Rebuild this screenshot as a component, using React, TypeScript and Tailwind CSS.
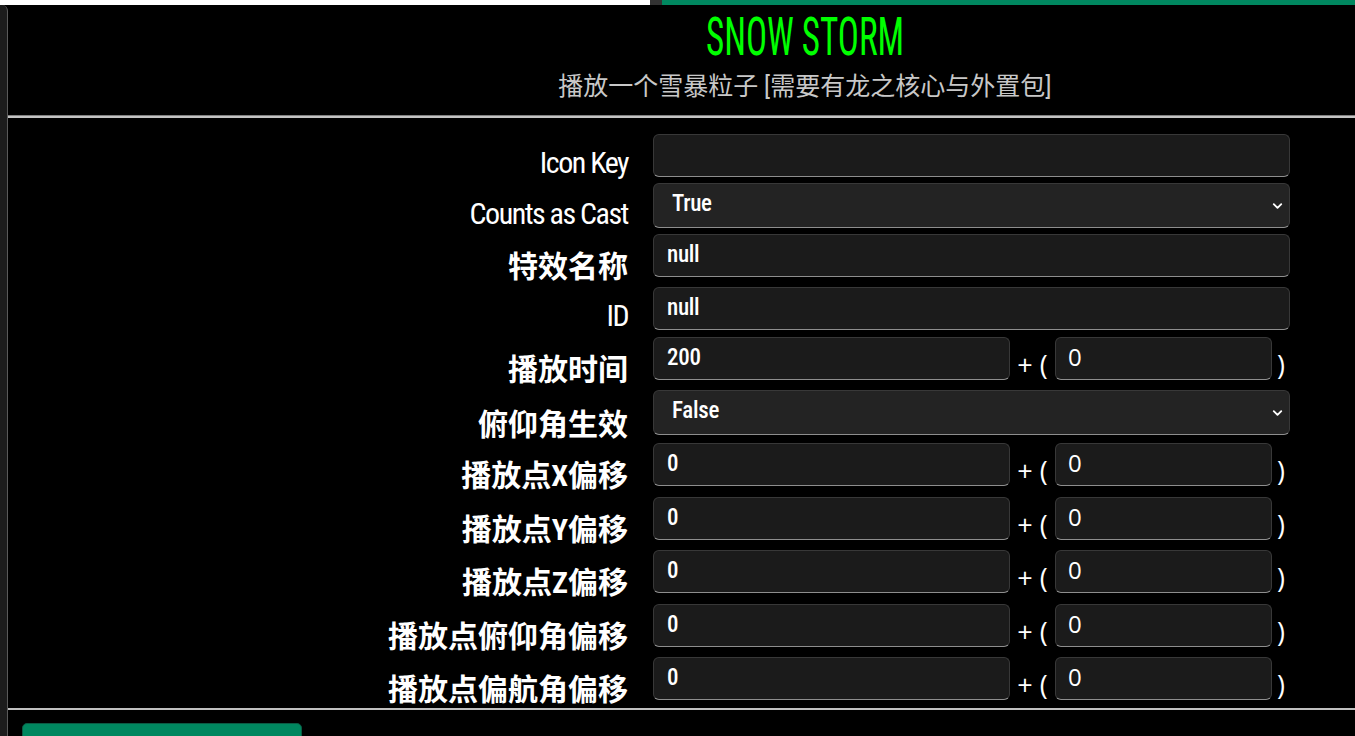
import { ChevronDown } from "lucide-react";

type Row = {
  label: string;
  cn: boolean;
  kind: "input" | "select" | "range";
  value: string;
  extra?: string;
  gap: string;
};

const ROWS: Row[] = [
  { label: "Icon Key", cn: false, kind: "input", value: "", gap: "mt-[16px]" },
  { label: "Counts as Cast", cn: false, kind: "select", value: "True", gap: "mt-[6px]" },
  { label: "特效名称", cn: true, kind: "input", value: "null", gap: "mt-[6px]" },
  { label: "ID", cn: false, kind: "input", value: "null", gap: "mt-[10px]" },
  { label: "播放时间", cn: true, kind: "range", value: "200", extra: "0", gap: "mt-[7px]" },
  { label: "俯仰角生效", cn: true, kind: "select", value: "False", gap: "mt-[10px]" },
  { label: "播放点X偏移", cn: true, kind: "range", value: "0", extra: "0", gap: "mt-[8px]" },
  { label: "播放点Y偏移", cn: true, kind: "range", value: "0", extra: "0", gap: "mt-[11px]" },
  { label: "播放点Z偏移", cn: true, kind: "range", value: "0", extra: "0", gap: "mt-[10px]" },
  { label: "播放点俯仰角偏移", cn: true, kind: "range", value: "0", extra: "0", gap: "mt-[11px]" },
  { label: "播放点偏航角偏移", cn: true, kind: "range", value: "0", extra: "0", gap: "mt-[10px]" },
];

const inputCls =
  "h-[43px] rounded-[6px] border border-[#383838] border-b-[#8e8e8e] bg-[#1b1b1b] pl-[13px] pb-[3px] text-[23px] font-medium tracking-[-0.3px] text-white outline-none [font-family:'Roboto_Condensed','Noto_Sans_CJK_SC',sans-serif]";

function Field({ row }: { row: Row }) {
  if (row.kind === "select") {
    return (
      <div className="relative w-[637px]">
        <select
          defaultValue={row.value}
          className="h-[45px] w-full appearance-none rounded-[6px] border border-[#383838] border-b-[#8e8e8e] bg-[#232323] pl-[18px] pb-[3px] text-[23px] font-medium tracking-[-0.3px] text-white outline-none [font-family:'Roboto_Condensed',sans-serif]"
        >
          <option>True</option>
          <option>False</option>
        </select>
        <ChevronDown
          className="pointer-events-none absolute right-[5px] top-1/2 -translate-y-1/2 text-white"
          size={15}
          strokeWidth={3}
        />
      </div>
    );
  }
  if (row.kind === "range") {
    return (
      <div className="flex w-[637px] items-end">
        <input readOnly value={row.value} className={`${inputCls} w-[357px]`} />
        <span className="mb-[2px] w-[45px] text-center text-[27px] leading-[27px] text-white [font-family:'Open_Sans',sans-serif]">
          + (
        </span>
        <input
          readOnly
          value={row.extra}
          className="h-[43px] w-[217px] rounded-[6px] border border-[#383838] border-b-[#8e8e8e] bg-[#1b1b1b] pl-[12px] pb-[5px] text-[24px] text-white outline-none [font-family:'Open_Sans',sans-serif]"
        />
        <span className="mb-[2px] w-[18px] text-center text-[27px] leading-[27px] text-white [font-family:'Open_Sans',sans-serif]">
          )
        </span>
      </div>
    );
  }
  return <input readOnly value={row.value} className={`${inputCls} w-[637px]`} />;
}

export default function App() {
  return (
    <div className="flex h-[736px] flex-col overflow-hidden bg-black">
      <div className="flex h-[5px] shrink-0">
        <div className="w-[650px] bg-white" />
        <div className="w-[12px] bg-[#333333]" />
        <div className="flex-1 bg-[#00875f]" />
      </div>

      <div className="flex flex-1">
        <div className="mb-[3px] w-[8px] shrink-0 rounded-r-[6px] border-r border-[#5a5a5a] bg-[#1c1c1c]" />

        <main className="flex-1">
          <div className="pl-[247px] pt-[5px] text-center">
            <div className="scale-x-[0.65] text-[54px] leading-[54px] text-[#00ff00] [font-family:'Roboto_Condensed',sans-serif]">
              SNOW STORM
            </div>
            <p className="mt-[10px] text-[25px] leading-[25px] text-[#c8c8c8] [font-family:'Roboto_Condensed','Noto_Sans_CJK_SC',sans-serif]">
              播放一个雪暴粒子 [需要有龙之核心与外置包]
            </p>
          </div>

          <div className="mt-[16px] h-[3px] border-t border-[#808080] bg-[#c4c4c4]" />

          <div className="flex flex-col">
            {ROWS.map((row) => (
              <div key={row.label} className={`flex items-end ${row.gap}`}>
                <div
                  className={`w-[620px] shrink-0 text-right text-[30px] leading-[30px] text-white [font-family:'Roboto_Condensed','Noto_Sans_CJK_SC',sans-serif] ${
                    row.cn ? "-mb-[5px] font-bold" : "-mb-[1px] font-normal tracking-[-1.5px]"
                  }`}
                >
                  {row.label}
                </div>
                <div className="ml-[25px]">
                  <Field row={row} />
                </div>
              </div>
            ))}
          </div>

          <div className="mt-[8px] h-[2px] bg-[#c0c0c0]" />

          <button className="ml-[14px] mt-[13px] h-[40px] w-[280px] rounded-[5px] border border-[#0b5a43] bg-[#00875f]" />
        </main>
      </div>
    </div>
  );
}
